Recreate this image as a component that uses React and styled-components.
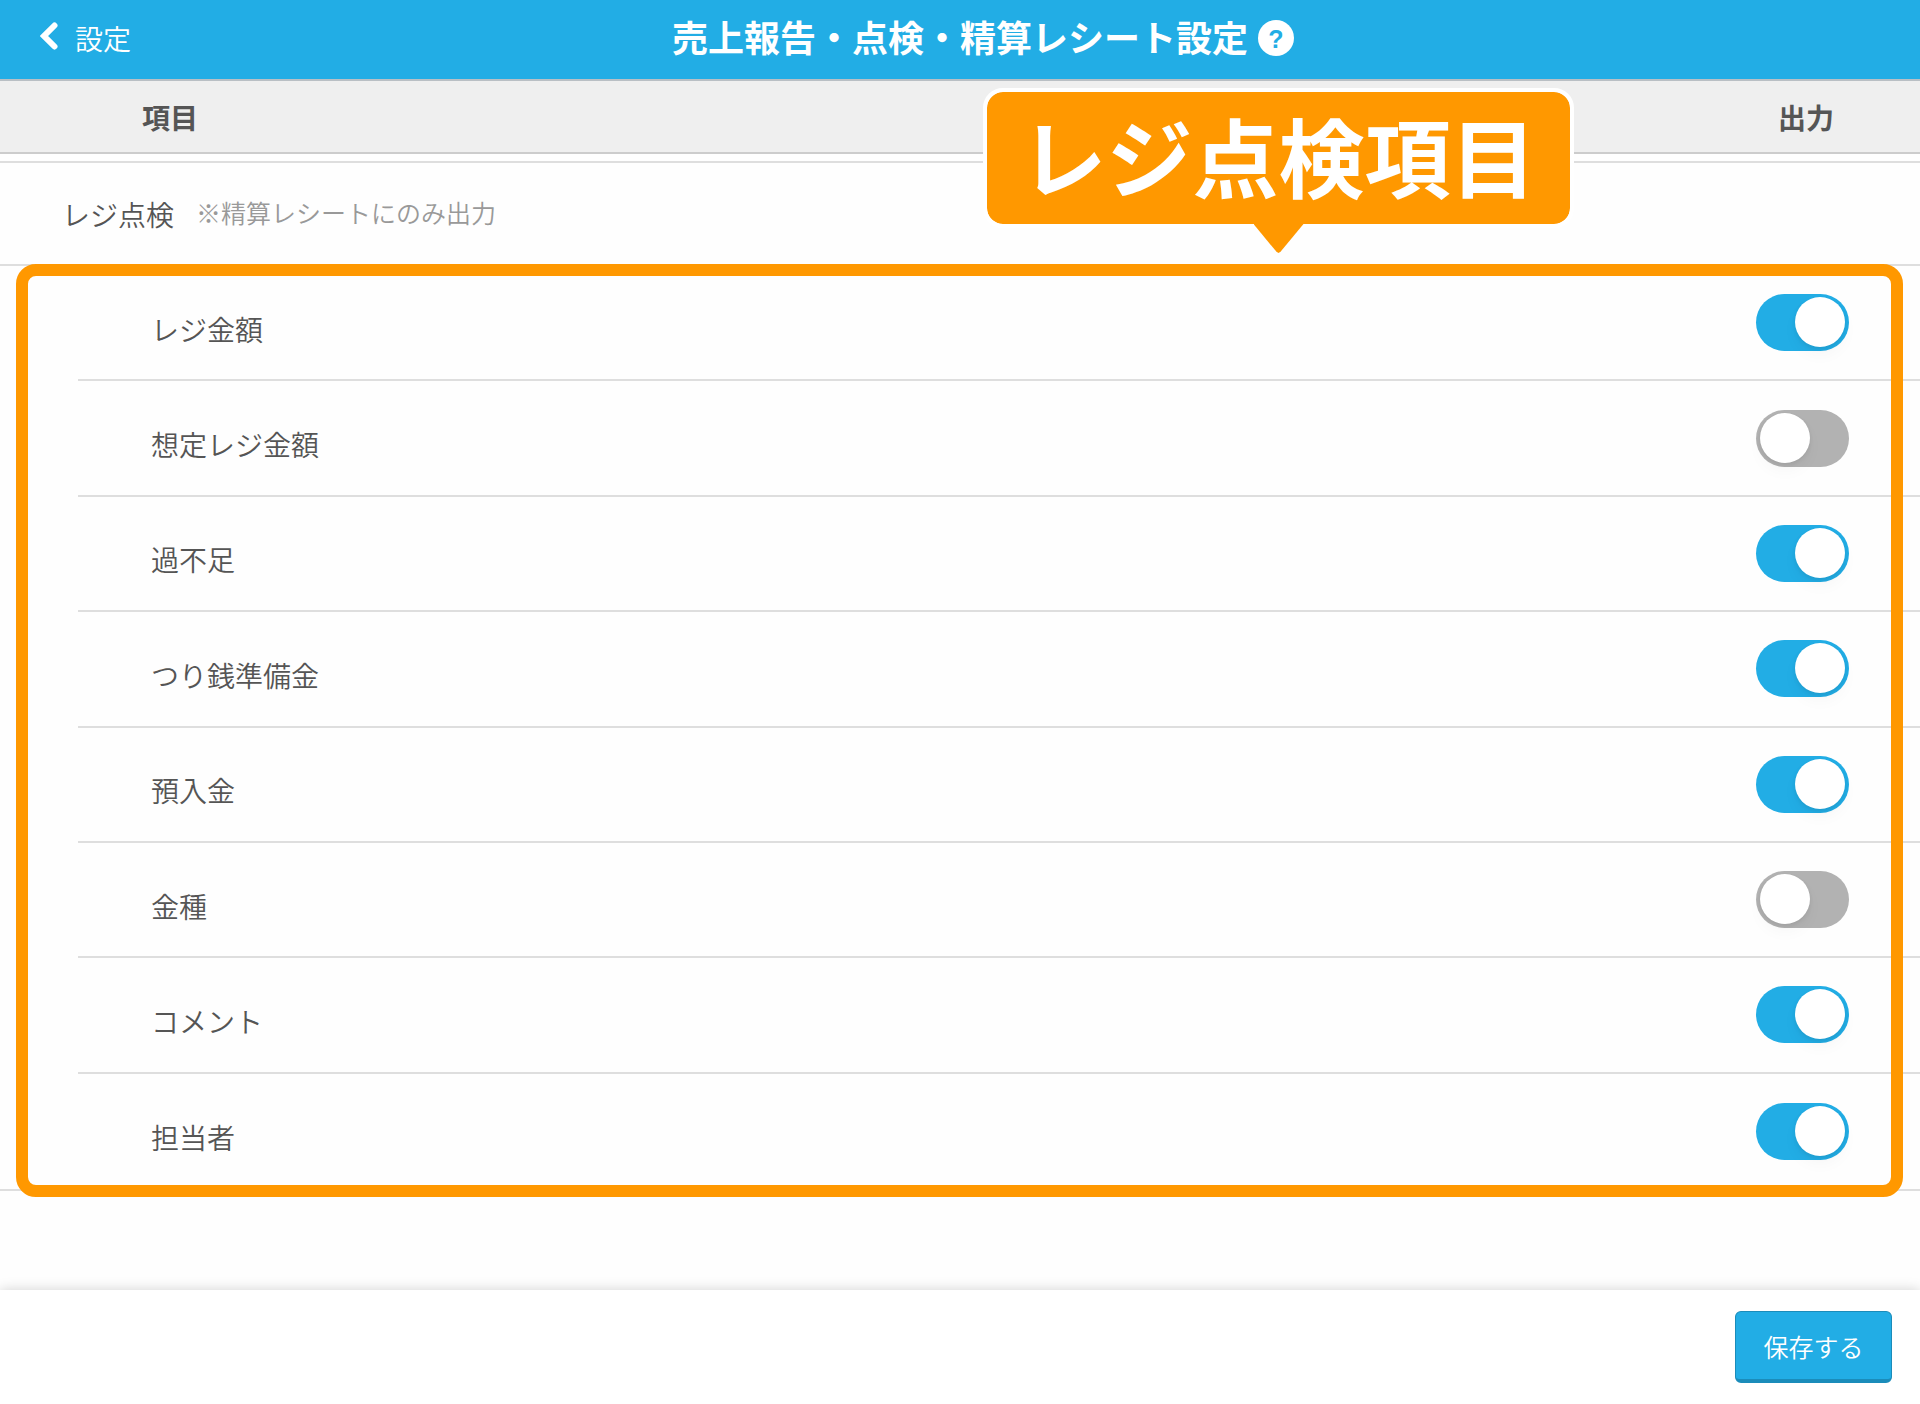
import React, { useState } from 'react';
import styled, { createGlobalStyle } from 'styled-components';

const items = [
    { id: 'cash', text: 'レジ金額', on: true },
    { id: 'expected', text: '想定レジ金額', on: false },
    { id: 'difference', text: '過不足', on: true },
    { id: 'change', text: 'つり銭準備金', on: true },
    { id: 'deposit', text: '預入金', on: true },
    { id: 'denomination', text: '金種', on: false },
    { id: 'comment', text: 'コメント', on: true },
    { id: 'staff', text: '担当者', on: true },
];

const App = () => {
    const [checked, setChecked] = useState(
        Object.fromEntries(items.map((item) => [item.id, item.on]))
    );

    const toggle = (id) => setChecked({ ...checked, [id]: !checked[id] });

    return (
        <Page>
            <GlobalStyle />
            <Header>
                <BackLink href="#settings">
                    <svg width="18" height="28" viewBox="0 0 18 28" fill="none" aria-hidden="true">
                        <path d="M14.5 3.5 L4 14 L14.5 24.5" stroke="#fff" strokeWidth="6" strokeLinecap="round" />
                    </svg>
                    <span>設定</span>
                </BackLink>
                <Title>売上報告・点検・精算レシート設定</Title>
                <HelpButton type="button">?</HelpButton>
            </Header>
            <ColumnHeader>
                <span>項目</span>
                <span>出力</span>
            </ColumnHeader>
            <Main>
                <Section>
                    <SectionTitle>レジ点検</SectionTitle>
                    <Note>※精算レシートにのみ出力</Note>
                    <Callout>レジ点検項目</Callout>
                </Section>
                <Highlight>
                    <ItemList>
                        {
                            items.map((item) => (
                                <Item key={item.id}>
                                    <label htmlFor={item.id}>{item.text}</label>
                                    <Switch
                                        id={item.id}
                                        type="checkbox"
                                        checked={checked[item.id]}
                                        onChange={() => toggle(item.id)}
                                    />
                                </Item>
                            ))
                        }
                    </ItemList>
                </Highlight>
            </Main>
            <Footer>
                <SaveButton type="button">保存する</SaveButton>
            </Footer>
        </Page>
    );
}

const GlobalStyle = createGlobalStyle`
    * {
        box-sizing: border-box;
    }
    body {
        margin: 0;
        background-color: #fefefe;
        color: #555555;
        font-family: "Noto Sans CJK JP", sans-serif;
        font-size: 28px;
        font-weight: 350;
        line-height: 40px;
    }
`

const Page = styled.div`
    display: flex;
    flex-direction: column;
    min-height: 100vh;
`

const Header = styled.header`
    display: grid;
    grid-template-columns: 1fr auto 1fr;
    align-items: center;
    height: 81px;
    padding: 0 40px 3px;
    background-color: #22ade5;
    border-bottom: 2px solid #b9bfc4;
    color: #ffffff;
`

const BackLink = styled.a`
    display: flex;
    align-items: center;
    gap: 17px;
    color: inherit;
    text-decoration: none;

    svg{
        margin-bottom: 4px;
    }
`

const Title = styled.h1`
    margin: 0;
    padding-bottom: 4px;
    font-size: 36px;
    font-weight: 700;
    line-height: 40px;
`

const HelpButton = styled.button`
    width: 36px;
    height: 36px;
    margin-left: 10px;
    padding: 2px 0 0;
    border: none;
    border-radius: 50%;
    background-color: #ffffff;
    color: #22ade5;
    font-family: "Liberation Sans", sans-serif;
    font-size: 25px;
    font-weight: 700;
    line-height: 34px;
    cursor: pointer;
`

const ColumnHeader = styled.div`
    display: flex;
    align-items: center;
    justify-content: space-between;
    height: 73px;
    padding: 0 86px 0 142px;
    background-color: #efefef;
    border-bottom: 2px solid #cccccc;
    font-weight: 700;
`

const Main = styled.main`
    flex: 1;
    margin-top: 7px;
`

const Section = styled.section`
    position: relative;
    display: flex;
    align-items: center;
    gap: 22px;
    height: 105px;
    padding-left: 62px;
    border-top: 2px solid #dedede;
    border-bottom: 2px solid #dedede;
`

const SectionTitle = styled.h2`
    margin: 0;
    font-size: 28px;
    font-weight: 350;
`

const Note = styled.span`
    padding-bottom: 3px;
    color: #999999;
    font-size: 25px;
`

// speech bubble pointing down at the highlighted list
const Callout = styled.div`
    position: absolute;
    z-index: 2;
    bottom: 36px;
    left: 983px;
    width: 591px;
    padding: 15px 0 21px;
    border: 4px solid #ffffff;
    border-radius: 20px;
    background-color: #ff9800;
    background-clip: padding-box;
    color: #ffffff;
    font-size: 86px;
    font-weight: 700;
    line-height: 96px;
    text-align: center;

    &::after{
        content: '';
        position: absolute;
        top: 100%;
        left: 50%;
        width: 50px;
        height: 29px;
        margin-left: -25px;
        background-color: #ff9800;
        clip-path: polygon(0 0, 100% 0, 54% 96%, 50% 100%, 46% 96%);
    }
`

const Highlight = styled.div`
    position: relative;

    &::after{
        content: '';
        position: absolute;
        inset: -2px 17px -6px 16px;
        border: 12px solid #ff9800;
        border-radius: 20px;
        pointer-events: none;
    }
`

const ItemList = styled.ul`
    display: grid;
    grid-auto-rows: 1fr;
    min-height: 925px;
    margin: 0;
    padding: 0;
    border-bottom: 2px solid #dedede;
    list-style-type: none;
`

const Item = styled.li`
    display: flex;
    align-items: center;
    justify-content: space-between;
    margin-left: 78px;
    padding: 0 71px 0 73px;

    &:not(:last-child){
        border-bottom: 2px solid #dedede;
    }
    label{
        padding-top: 12px;
    }
`

const Switch = styled.input`
    appearance: none;
    display: flex;
    width: 93px;
    height: 57px;
    margin: 0;
    padding: 3px 4px;
    border-radius: 29px;
    background-color: #b2b2b2;
    cursor: pointer;

    &::before{
        content: '';
        width: 50px;
        height: 50px;
        border-radius: 50%;
        background-color: #ffffff;
        box-shadow: 0 8px 16px rgba(0,0,0,0.03), 0 2px 4px rgba(0,0,0,0.08);
    }
    &:checked{
        justify-content: flex-end;
        background-color: #22ade5;
    }
`

const Footer = styled.footer`
    display: flex;
    align-items: center;
    justify-content: flex-end;
    height: 114px;
    padding: 0 28px;
    background-color: #ffffff;
    box-shadow: 0 0 12px rgba(0,0,0,0.18);
`

const SaveButton = styled.button`
    width: 157px;
    height: 72px;
    padding: 0;
    border: 1px solid #1b8cba;
    border-bottom-width: 4px;
    border-radius: 6px;
    background-color: #22ade5;
    color: #ffffff;
    font-family: inherit;
    font-size: 25px;
    font-weight: 350;
    line-height: 40px;
    cursor: pointer;
`

export default App;
